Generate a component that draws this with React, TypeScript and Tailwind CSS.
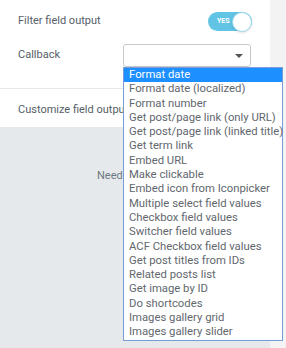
import React from 'react';

const options = [
  'Format date',
  'Format date (localized)',
  'Format number',
  'Get post/page link (only URL)',
  'Get post/page link (linked title)',
  'Get term link',
  'Embed URL',
  'Make clickable',
  'Embed icon from Iconpicker',
  'Multiple select field values',
  'Checkbox field values',
  'Switcher field values',
  'ACF Checkbox field values',
  'Get post titles from IDs',
  'Related posts list',
  'Get image by ID',
  'Do shortcodes',
  'Images gallery grid',
  'Images gallery slider',
];

const Toggle: React.FC = () => (
  <div className="relative w-[44px] h-[19px] rounded-full bg-[#62c4e4]">
    <span className="absolute left-[9px] top-[5px] text-[7px] leading-[9px] font-bold text-white">YES</span>
    <span className="absolute right-0 top-[-0.5px] w-[20px] h-[20px] rounded-full bg-white border border-[#9fd9ec] shadow-sm" />
  </div>
);

export default function App() {
  return (
    <div className="relative w-[286px] h-[348px] overflow-hidden bg-[#f3f3f3] font-['Roboto',sans-serif]">
      <div className="w-[270px] h-full flex flex-col bg-white">
        {/* switcher row */}
        <div className="flex items-center justify-between pl-[18px] pr-[18px] pt-[11px] h-[32px]">
          <span className="text-[11px] text-[#556068]">Filter field output</span>
          <Toggle />
        </div>

        {/* callback row */}
        <div className="flex items-center justify-between pl-[18px] pr-[19px] mt-[12px] h-[23px]">
          <span className="text-[11px] text-[#556068]">Callback</span>
          <div className="relative w-[128px] h-[23px] rounded-[3px] border border-[#c5c9ce] bg-white">
            <span className="absolute right-[7px] top-[9px] w-0 h-0 border-l-[4px] border-r-[4px] border-t-[4px] border-l-transparent border-r-transparent border-t-[#555]" />
          </div>
        </div>

        <div className="mt-[21px] border-t border-[#e6e9ec]" />

        <div className="pl-[18px] h-[38px] pt-[7px]">
          <span className="text-[11px] text-[#556068]">Customize field output</span>
        </div>

        {/* help area */}
        <div className="flex-1 bg-[#e6e9ec] pl-[97px] pt-[35px]">
          <span className="text-[11px] text-[#6d7882]">Need help?</span>
        </div>
      </div>

      {/* open listbox */}
      <ul className="absolute left-[123px] top-[67px] w-[160px] border border-[#7a9cd6] bg-white text-[11.3px] leading-[14.3px] text-[#62676e]">
        {options.map((o, i) => (
          <li
            key={o}
            className={
              'pl-[5px] whitespace-nowrap ' +
              (i === 0 ? 'bg-[#1e8fff] text-white' : '')
            }
          >
            {o}
          </li>
        ))}
      </ul>
    </div>
  );
}
